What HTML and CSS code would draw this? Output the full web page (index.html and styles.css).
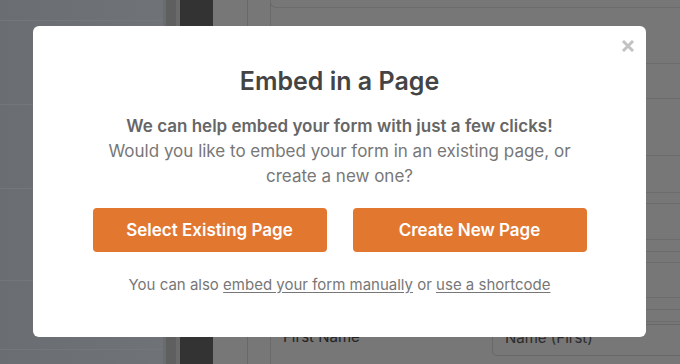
FILE: index.html
```html
<!DOCTYPE html>
<html lang="en">
<head>
<meta charset="utf-8">
<title>Embed in a Page</title>
<link rel="stylesheet" href="styles.css">
</head>
<body>
<div class="page">
  <div class="sidebar">
    <div class="side-row r1"></div>
    <div class="side-row r2"></div>
    <div class="side-row r3"></div>
    <div class="side-row r4"></div>
    <div class="side-row r5"></div>
  </div>
  <div class="edge"></div>
  <div class="strip"></div>
  <div class="strip-gap"></div>
  <div class="dark"></div>
  <div class="main">
    <div class="gutter"></div>
    <div class="canvas">
      <div class="panel">
        <div class="row top-box"></div>
        <div class="row" style="height:56px"></div>
        <div class="row" style="height:35px"></div>
        <div class="row" style="height:57px"></div>
        <div class="row" style="height:37px"></div>
        <div class="row" style="height:11px"></div>
        <div class="row" style="height:36px"></div>
        <div class="row" style="height:12px"></div>
        <div class="row" style="height:11px"></div>
        <div class="row" style="height:35px"></div>
        <div class="row" style="height:12px"></div>
        <div class="row" style="height:12px"></div>
        <div class="field-row">
          <span class="field-label">First Name</span>
          <span class="field-input">Name (First)</span>
        </div>
      </div>
    </div>
  </div>
</div>

<div class="overlay">
  <div class="modal">
    <button class="close" aria-label="Close">
      <svg width="12" height="12" viewBox="0 0 12 12"><path d="M2 2 L10 10 M10 2 L2 10" stroke="#c2c2c2" stroke-width="3" stroke-linecap="square"/></svg>
    </button>
    <h1 class="title">Embed in a Page</h1>
    <p class="lead"><strong>We can help embed your form with just a few clicks!</strong><br>Would you like to embed your form in an existing page, or create a new one?</p>
    <div class="actions">
      <button class="btn">Select Existing Page</button>
      <button class="btn">Create New Page</button>
    </div>
    <p class="foot">You can also <a href="#">embed your form manually</a> or <a href="#">use a shortcode</a></p>
  </div>
</div>
</body>
</html>
```

FILE: styles.css
```css
* { box-sizing: border-box; }
html, body { margin: 0; padding: 0; }
body {
  width: 680px;
  height: 364px;
  overflow: hidden;
  font-family: Inter, "Noto Sans", sans-serif;
  background: #777;
}
.page {
  display: flex;
  width: 680px;
  height: 364px;
}
.sidebar {
  width: 163px;
  background: linear-gradient(90deg, #6a6e72, #6f7377);
  display: flex;
  flex-direction: column;
}
.side-row { border-bottom: 1px solid #73777b; }
.r1 { height: 21px; }
.r2 { height: 84px; }
.r3 { height: 84px; }
.r4 { height: 92px; }
.r5 { height: 69px; }
.edge { width: 3px; background: #696c6f; }
.strip { width: 10px; background: #5f5f5f; }
.strip-gap { width: 4px; background: #6a6a6a; }
.dark { width: 33px; background: #333; }
.main {
  flex: 1;
  display: flex;
  background: #777;
}
.gutter {
  width: 35px;
  border-right: 1px solid #686868;
}
.canvas {
  flex: 1;
  padding-left: 22px;
}
.panel {
  border-left: 1px solid #6a6a6a;
  height: 100%;
  display: flex;
  flex-direction: column;
}
.row {
  border-bottom: 1px solid #6c6c6c;
  flex: none;
}
.top-box {
  height: 8px;
  border-bottom-left-radius: 6px;
  border-left: 1px solid #6a6a6a;
  margin-left: -1px;
}
.field-row {
  display: flex;
  align-items: flex-start;
  padding-top: 2px;
  padding-left: 12px;
}
.field-label {
  width: 209px;
  font-size: 15px;
  line-height: 20px;
  padding-top: 3px;
  color: #242424;
}
.field-input {
  flex: 1;
  height: 32px;
  border: 1px solid #686868;
  border-right: none;
  border-radius: 5px 0 0 5px;
  padding: 3px 12px;
  font-size: 15px;
  line-height: 20px;
  color: #2c2c2c;
}

.overlay {
  position: fixed;
  inset: 0;
}
.modal {
  position: absolute;
  left: 33px;
  top: 26px;
  width: 613px;
  height: 311px;
  background: #fff;
  border-radius: 6px;
  padding-top: 40px;
  display: flex;
  flex-direction: column;
  align-items: center;
  text-align: center;
}
.close {
  position: absolute;
  top: 14px;
  right: 12px;
  width: 12px;
  height: 12px;
  padding: 0;
  border: 0;
  background: none;
  display: flex;
}
.title {
  margin: 0;
  font-size: 25px;
  line-height: 30px;
  font-weight: 600;
  color: #444;
}
.lead {
  margin: 18px 0 0;
  font-size: 17px;
  line-height: 25px;
  color: #777;
  width: 490px;
}
.lead strong { font-weight: 600; color: #666; }
.actions {
  margin-top: 19px;
  display: flex;
  gap: 26px;
}
.btn {
  width: 234px;
  height: 44px;
  border: 0;
  border-radius: 4px;
  background: #e27730;
  color: #fff;
  font-family: Inter, "Noto Sans", sans-serif;
  font-size: 17px;
  font-weight: 600;
  padding: 0;
}
.foot {
  margin: 23px 0 0;
  font-size: 15px;
  line-height: 20px;
  color: #777;
}
.foot a {
  color: #777;
  text-decoration: underline;
  text-underline-offset: 2px;
}
```
